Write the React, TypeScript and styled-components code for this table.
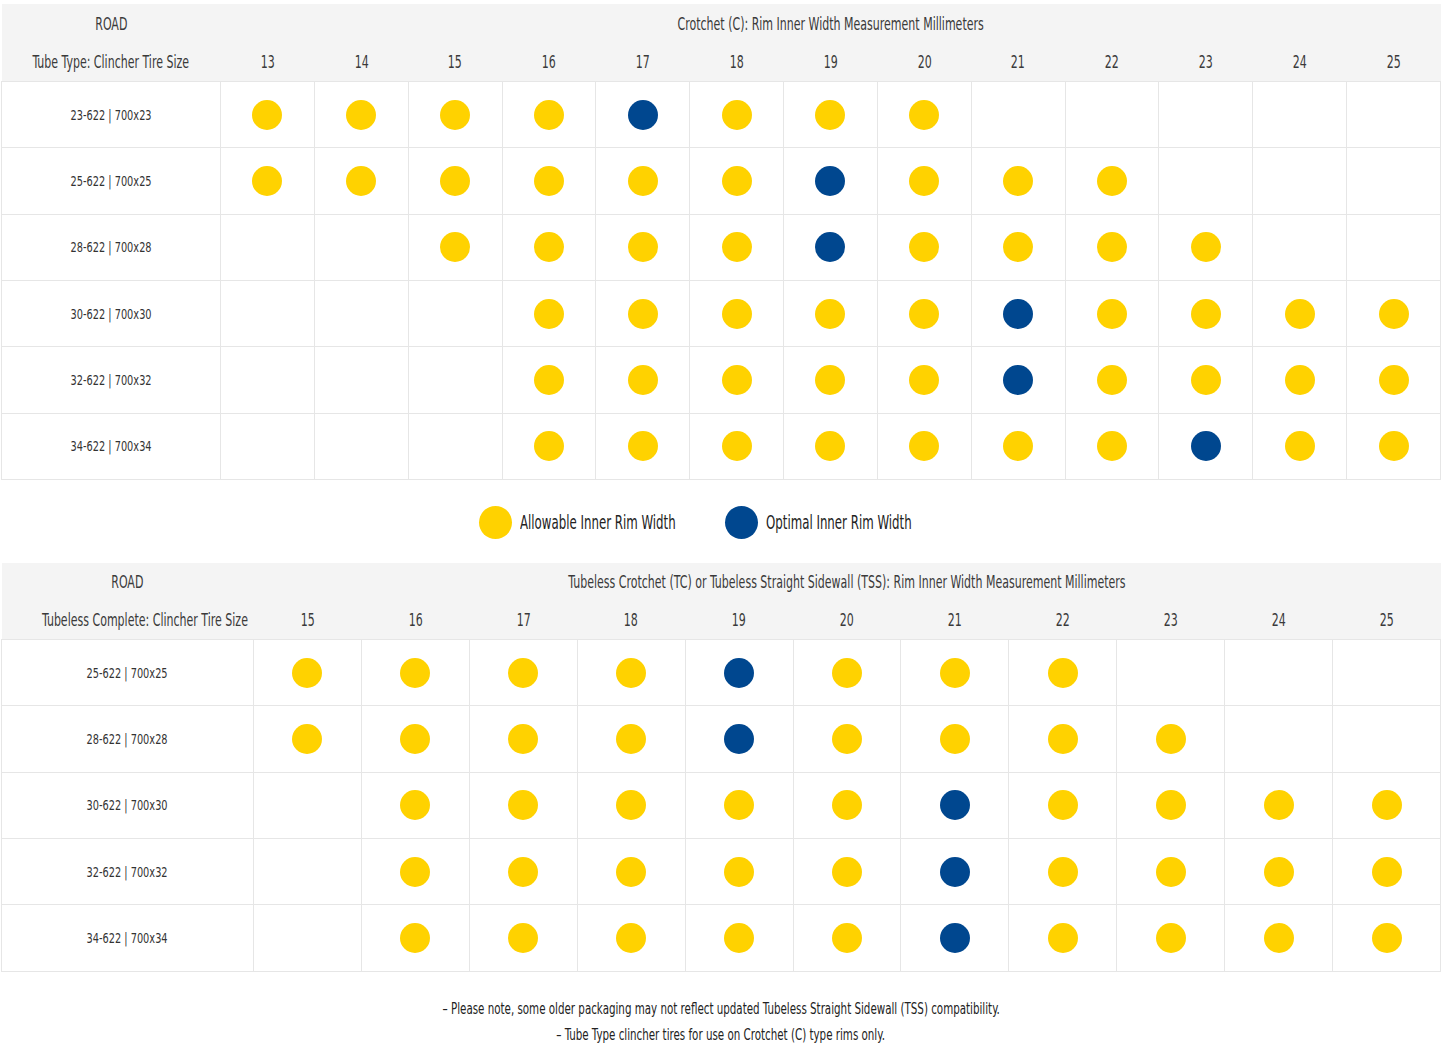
import React from 'react';
import styled, { createGlobalStyle } from 'styled-components';

const GlobalStyle = createGlobalStyle`
  body {
    margin: 0;
    background: #fff;
    font-family: "DejaVu Sans Condensed", "DejaVu Sans", "Roboto", sans-serif;
    font-stretch: condensed;
    color: #333;
  }
`;

type Mark = 'Y' | 'B' | '.';

const Page = styled.div`
  width: 1440px;
  padding: 4px 1px 0 1px;
`;

// the reference type is a tall, narrow face; squeeze the installed condensed one
const Narrow = styled.span<{ $scale?: number; $origin?: string }>`
  display: inline-block;
  white-space: nowrap;
  transform: scaleX(${(p) => p.$scale ?? 0.72});
  transform-origin: ${(p) => p.$origin ?? 'center'};
`;

const Table = styled.table`
  width: 100%;
  border-collapse: collapse;
  table-layout: fixed;
`;

const HeadCell = styled.th<{ $h: number }>`
  height: ${(p) => p.$h}px;
  padding: 0;
  background: #f4f4f4;
  color: #3a3a3a;
  font-size: 17px;
  font-weight: 400;
  text-align: center;
  vertical-align: middle;
  white-space: nowrap;
`;

const LabelCell = styled.td`
  height: 65.33px;
  padding: 0;
  border: 1px solid #e6e6e6;
  font-size: 14.5px;
  color: #333;
  text-align: center;
  vertical-align: middle;
`;

const DotCell = styled.td`
  padding: 0;
  border: 1px solid #e6e6e6;
  text-align: center;
  vertical-align: middle;
`;

const Dot = styled.span<{ $optimal?: boolean; $size?: number }>`
  display: inline-block;
  flex-shrink: 0;
  width: ${(p) => p.$size ?? 30}px;
  height: ${(p) => p.$size ?? 30}px;
  border-radius: 50%;
  background: ${(p) => (p.$optimal ? '#00478f' : '#ffd200')};
  vertical-align: middle;
`;

const Legend = styled.div`
  height: 83px;
  display: flex;
  align-items: center;
  justify-content: center;
  gap: 47px;
  padding-right: 50px;
  padding-top: 2px;
  box-sizing: border-box;
`;

const LegendItem = styled.div`
  display: flex;
  align-items: center;
  gap: 8px;
  font-size: 19px;
  color: #222;
`;

const LegendText = styled.div<{ $w: number }>`
  width: ${(p) => p.$w}px;
`;

const Notes = styled.div`
  padding-top: 24px;
  text-align: center;
  font-size: 16px;
  line-height: 26px;
  color: #222;
`;

type ChartProps = {
  road: string;
  sizeTitle: string;
  rimTitle: string;
  labelWidth: number;
  topHeight: number;
  cols: number[];
  rows: { label: string; marks: string }[];
};

function Chart({ road, sizeTitle, rimTitle, labelWidth, topHeight, cols, rows }: ChartProps) {
  return (
    <Table>
      <colgroup>
        <col style={{ width: labelWidth }} />
        {cols.map((c) => (
          <col key={c} />
        ))}
      </colgroup>
      <thead>
        <tr>
          <HeadCell $h={topHeight}>
            <Narrow>{road}</Narrow>
          </HeadCell>
          <HeadCell $h={topHeight} colSpan={cols.length}>
            <Narrow>{rimTitle}</Narrow>
          </HeadCell>
        </tr>
        <tr>
          <HeadCell $h={38}>
            <Narrow>{sizeTitle}</Narrow>
          </HeadCell>
          {cols.map((c) => (
            <HeadCell $h={38} key={c}>
              <Narrow>{c}</Narrow>
            </HeadCell>
          ))}
        </tr>
      </thead>
      <tbody>
        {rows.map((r) => (
          <tr key={r.label}>
            <LabelCell>
              <Narrow $scale={0.75}>{r.label}</Narrow>
            </LabelCell>
            {r.marks.split('').map((m, i) => (
              <DotCell key={i}>{(m as Mark) !== '.' && <Dot $optimal={m === 'B'} />}</DotCell>
            ))}
          </tr>
        ))}
      </tbody>
    </Table>
  );
}

const tubeRows = [
  { label: '23-622 | 700x23', marks: 'YYYYBYYY.....' },
  { label: '25-622 | 700x25', marks: 'YYYYYYBYYY...' },
  { label: '28-622 | 700x28', marks: '..YYYYBYYYY..' },
  { label: '30-622 | 700x30', marks: '...YYYYYBYYYY' },
  { label: '32-622 | 700x32', marks: '...YYYYYBYYYY' },
  { label: '34-622 | 700x34', marks: '...YYYYYYYBYY' },
];

const tubelessRows = [
  { label: '25-622 | 700x25', marks: 'YYYYBYYY...' },
  { label: '28-622 | 700x28', marks: 'YYYYBYYYY..' },
  { label: '30-622 | 700x30', marks: '.YYYYYBYYYY' },
  { label: '32-622 | 700x32', marks: '.YYYYYBYYYY' },
  { label: '34-622 | 700x34', marks: '.YYYYYBYYYY' },
];

const range = (a: number, b: number) => Array.from({ length: b - a + 1 }, (_, i) => a + i);

export default function App() {
  return (
    <Page>
      <GlobalStyle />
      <Chart
        road="ROAD"
        sizeTitle="Tube Type: Clincher Tire Size"
        rimTitle="Crotchet (C): Rim Inner Width Measurement Millimeters"
        labelWidth={219}
        topHeight={39}
        cols={range(13, 25)}
        rows={tubeRows}
      />
      <Legend>
        <LegendItem>
          <Dot $size={33} />
          <LegendText $w={158}>
            <Narrow $scale={0.69} $origin="left">
              Allowable Inner Rim Width
            </Narrow>
          </LegendText>
        </LegendItem>
        <LegendItem>
          <Dot $size={33} $optimal />
          <LegendText $w={148}>
            <Narrow $scale={0.69} $origin="left">
              Optimal Inner Rim Width
            </Narrow>
          </LegendText>
        </LegendItem>
      </Legend>
      <Chart
        road="ROAD"
        sizeTitle="Tubeless Complete: Clincher Tire Size"
        rimTitle="Tubeless Crotchet (TC) or Tubeless Straight Sidewall (TSS): Rim Inner Width Measurement Millimeters"
        labelWidth={252}
        topHeight={38}
        cols={range(15, 25)}
        rows={tubelessRows}
      />
      <Notes>
        <div>
          <Narrow $scale={0.716}>
            – Please note, some older packaging may not reflect updated Tubeless Straight Sidewall (TSS) compatibility.
          </Narrow>
        </div>
        <div>
          <Narrow $scale={0.716}>– Tube Type clincher tires for use on Crotchet (C) type rims only.</Narrow>
        </div>
      </Notes>
    </Page>
  );
}
